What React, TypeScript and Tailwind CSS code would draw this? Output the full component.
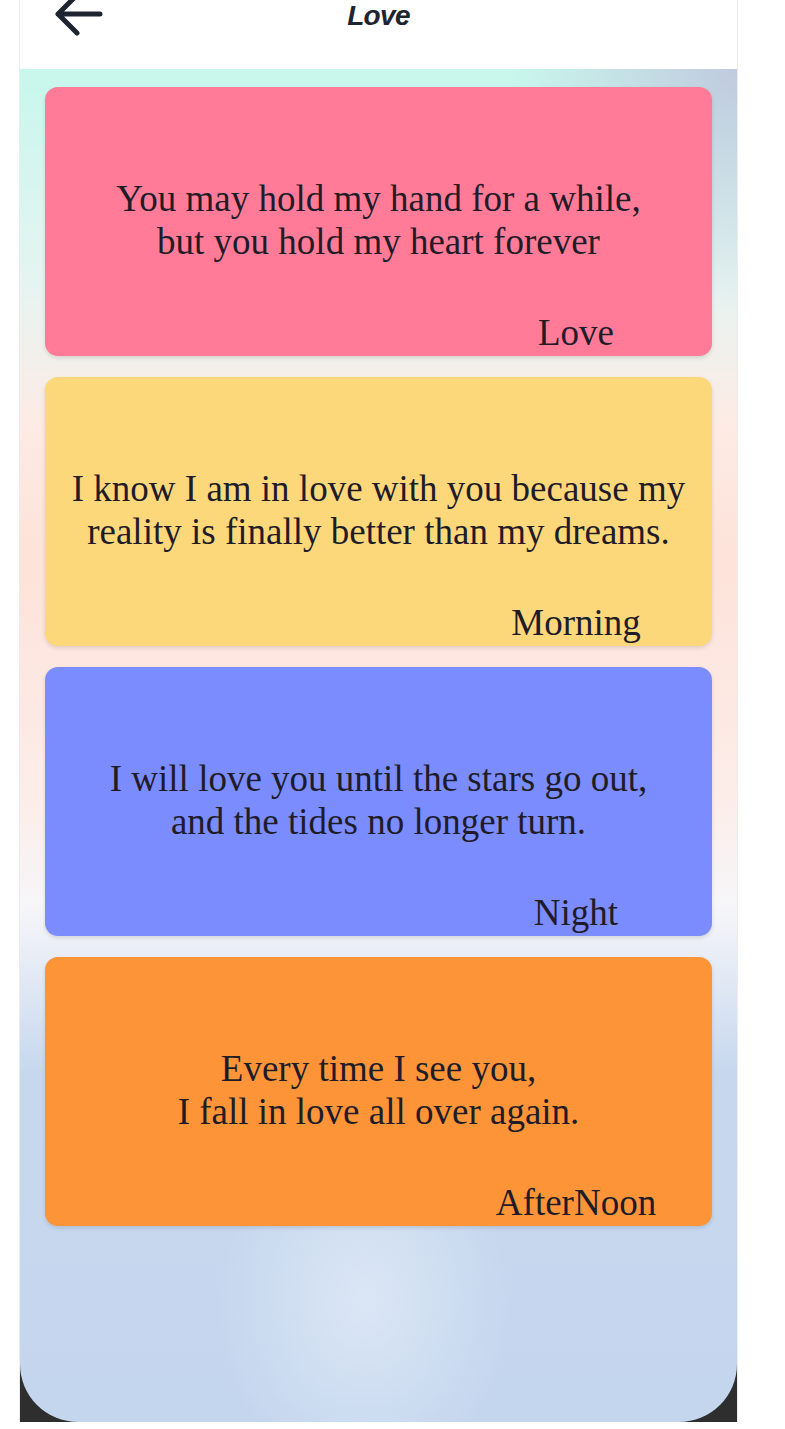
import React from "react";

type Quote = {
  id: number;
  lines: string[];
  label: string;
  bg: string;
};

const quotes: Quote[] = [
  {
    id: 1,
    lines: ["You may hold my hand for a while,", "but you hold my heart forever"],
    label: "Love",
    bg: "bg-[#ff7b98]",
  },
  {
    id: 2,
    lines: ["I know I am in love with you because my", "reality is finally better than my dreams."],
    label: "Morning",
    bg: "bg-[#fdd87b]",
  },
  {
    id: 3,
    lines: ["I will love you until the stars go out,", "and the tides no longer turn."],
    label: "Night",
    bg: "bg-[#7b8cff]",
  },
  {
    id: 4,
    lines: ["Every time I see you,", "I fall in love all over again."],
    label: "AfterNoon",
    bg: "bg-[#fd9437]",
  },
];

const BackArrow = () => (
  <svg width="52" height="40" viewBox="0 0 52 40" fill="none" className="block">
    <path
      d="M4 14H46 M23 -5L4 14L23 33"
      stroke="#1e2530"
      strokeWidth="5"
      strokeLinecap="round"
      strokeLinejoin="round"
    />
  </svg>
);

const QuoteCard: React.FC<{ quote: Quote }> = ({ quote }) => (
  <div
    className={`${quote.bg} h-[269px] rounded-[13px] shadow-[0_2px_4px_rgba(0,0,0,0.12)] flex flex-col pt-[90px] text-[#1f1c28]`}
  >
    <div className="text-center text-[37px] leading-[43px]">
      {quote.lines.map((line) => (
        <div key={line}>{line}</div>
      ))}
    </div>
    <div className="mt-auto flex justify-end pr-[36px] pb-[2px]">
      <div className="w-[200px] text-center text-[37px] leading-[43px]">{quote.label}</div>
    </div>
  </div>
);

export default function App() {
  return (
    <div className="min-h-screen bg-white font-['Liberation_Serif',serif]">
      <div className="ml-[19px] w-[719px] bg-[#2e2e2e] border-x border-[#ececec]">
        <header className="h-[69px] bg-white grid grid-cols-[1fr_auto_1fr]">
          <div className="pl-[34px]">
            <BackArrow />
          </div>
          <h1 className="pt-[1px] text-[28px] leading-[29px] font-bold italic text-[#1e2530] font-['Liberation_Sans',sans-serif] tracking-tight">
            Love
          </h1>
          <div />
        </header>
        <main className="h-[1353px] rounded-b-[58px] px-[25px] pt-[18px] flex flex-col gap-[21px] bg-[radial-gradient(ellipse_42%_24%_at_100%_0%,rgba(192,200,222,0.95),transparent_75%),radial-gradient(ellipse_24%_16%_at_48%_91%,rgba(228,237,248,0.7),transparent_85%),linear-gradient(180deg,#c7f7ec_0%,#e6f4f1_16%,#fdebe5_26%,#fde3d9_36%,#fde8e2_46%,#fcede9_54%,#f6f6f9_62%,#dfe7f4_68%,#c7d8ee_74%,#c4d6ee_100%)]">
          {quotes.map((quote) => (
            <QuoteCard key={quote.id} quote={quote} />
          ))}
        </main>
      </div>
    </div>
  );
}
